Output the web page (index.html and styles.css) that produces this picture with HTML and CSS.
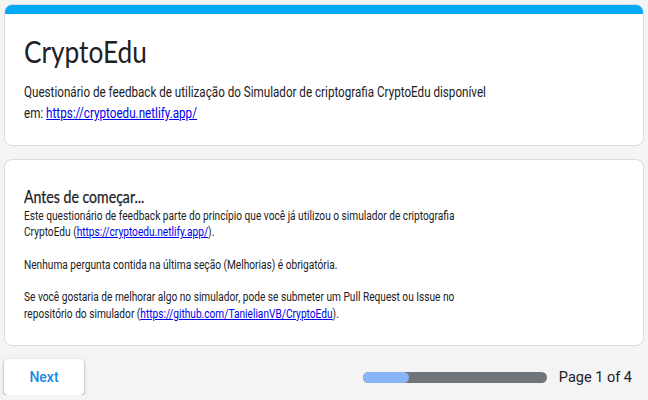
FILE: index.html
```html
<!DOCTYPE html>
<html lang="pt">
<head>
<meta charset="utf-8">
<title>CryptoEdu</title>
<link rel="stylesheet" href="styles.css">
</head>
<body>
<div class="page">
  <section class="card header-card">
    <div class="topbar"></div>
    <div class="card-body">
      <h1 class="title">CryptoEdu</h1>
      <p class="desc">Questionário de feedback de utilização do Simulador de criptografia CryptoEdu disponível<br>em: <a href="#">https://cryptoedu.netlify.app/</a></p>
    </div>
  </section>
  <section class="card info-card">
    <h2 class="section-title">Antes de começar...</h2>
    <div class="info-text">
      <p>Este questionário de feedback parte do princípio que você já utilizou o simulador de criptografia<br>CryptoEdu (<a href="#">https://cryptoedu.netlify.app/</a>).</p>
      <p>Nenhuma pergunta contida na última seção (Melhorias) é obrigatória.</p>
      <p>Se você gostaria de melhorar algo no simulador, pode se submeter um Pull Request ou Issue no<br>repositório do simulador (<a href="#">https://github.com/TanielianVB/CryptoEdu</a>).</p>
    </div>
  </section>
  <div class="footer">
    <button class="next-btn">Next</button>
    <div class="progress">
      <div class="track"><div class="fill" style="width:25%"></div></div>
      <span class="page-label">Page 1 of 4</span>
    </div>
  </div>
</div>
</body>
</html>
```

FILE: styles.css
```css
* { box-sizing: border-box; }
html, body { margin: 0; padding: 0; }
body {
  background: #f4f4f4;
  font-family: Roboto, "Liberation Sans", sans-serif;
  color: #202124;
}
.page {
  width: 640px;
  margin: 4px 0 0 4px;
  display: flex;
  flex-direction: column;
  gap: 13px;
}
.card {
  background: #fff;
  border: 1px solid #dadce0;
  border-radius: 8px;
  overflow: hidden;
}
.topbar {
  height: 10px;
  background: #03a9f4;
  margin: -1px -1px 0;
}
.header-card { height: 142px; }
.card-body { padding: 17px 19px 0; }
.title {
  margin: 0;
  font-family: Lato, "Open Sans", sans-serif;
  font-weight: 400;
  font-size: 30px;
  line-height: 40px;
  color: #202124;
  white-space: nowrap;
  transform-origin: 0 0;
  transform: scaleX(0.875);
}
.desc {
  margin: 11px 0 0;
  font-size: 14px;
  line-height: 21px;
  white-space: nowrap;
  transform-origin: 0 0;
  transform: scaleX(0.832);
}
a { color: #0000ee; }
.info-card {
  height: 187px;
  padding: 26px 19px 0;
}
.section-title {
  margin: 0;
  font-family: Lato, "Open Sans", sans-serif;
  font-weight: 400;
  font-size: 17px;
  line-height: 22px;
  -webkit-text-stroke: 0.25px #202124;
  white-space: nowrap;
  transform-origin: 0 0;
  transform: scaleX(0.83);
}
.info-text {
  font-size: 12.5px;
  line-height: 16.3px;
  white-space: nowrap;
  transform-origin: 0 0;
  transform: scaleX(0.812);
}
.info-text p { margin: 0 0 16.3px; }
.footer {
  display: flex;
  align-items: center;
  justify-content: space-between;
  padding-right: 12px;
}
.next-btn {
  width: 80px;
  height: 36px;
  border: none;
  border-radius: 4px;
  background: #fff;
  color: #1a88e6;
  font-family: Roboto, sans-serif;
  font-weight: 500;
  font-size: 14px;
  box-shadow: 0 1px 2px rgba(0,0,0,0.3), 0 1px 3px 1px rgba(0,0,0,0.1);
}
.progress { display: flex; align-items: center; gap: 12px; }
.track {
  width: 184px;
  height: 11px;
  border-radius: 6px;
  background: #70757a;
  overflow: hidden;
}
.fill { height: 100%; background: #8ab4f8; border-radius: 6px; }
.page-label { font-size: 14.5px; color: #202124; }
```
